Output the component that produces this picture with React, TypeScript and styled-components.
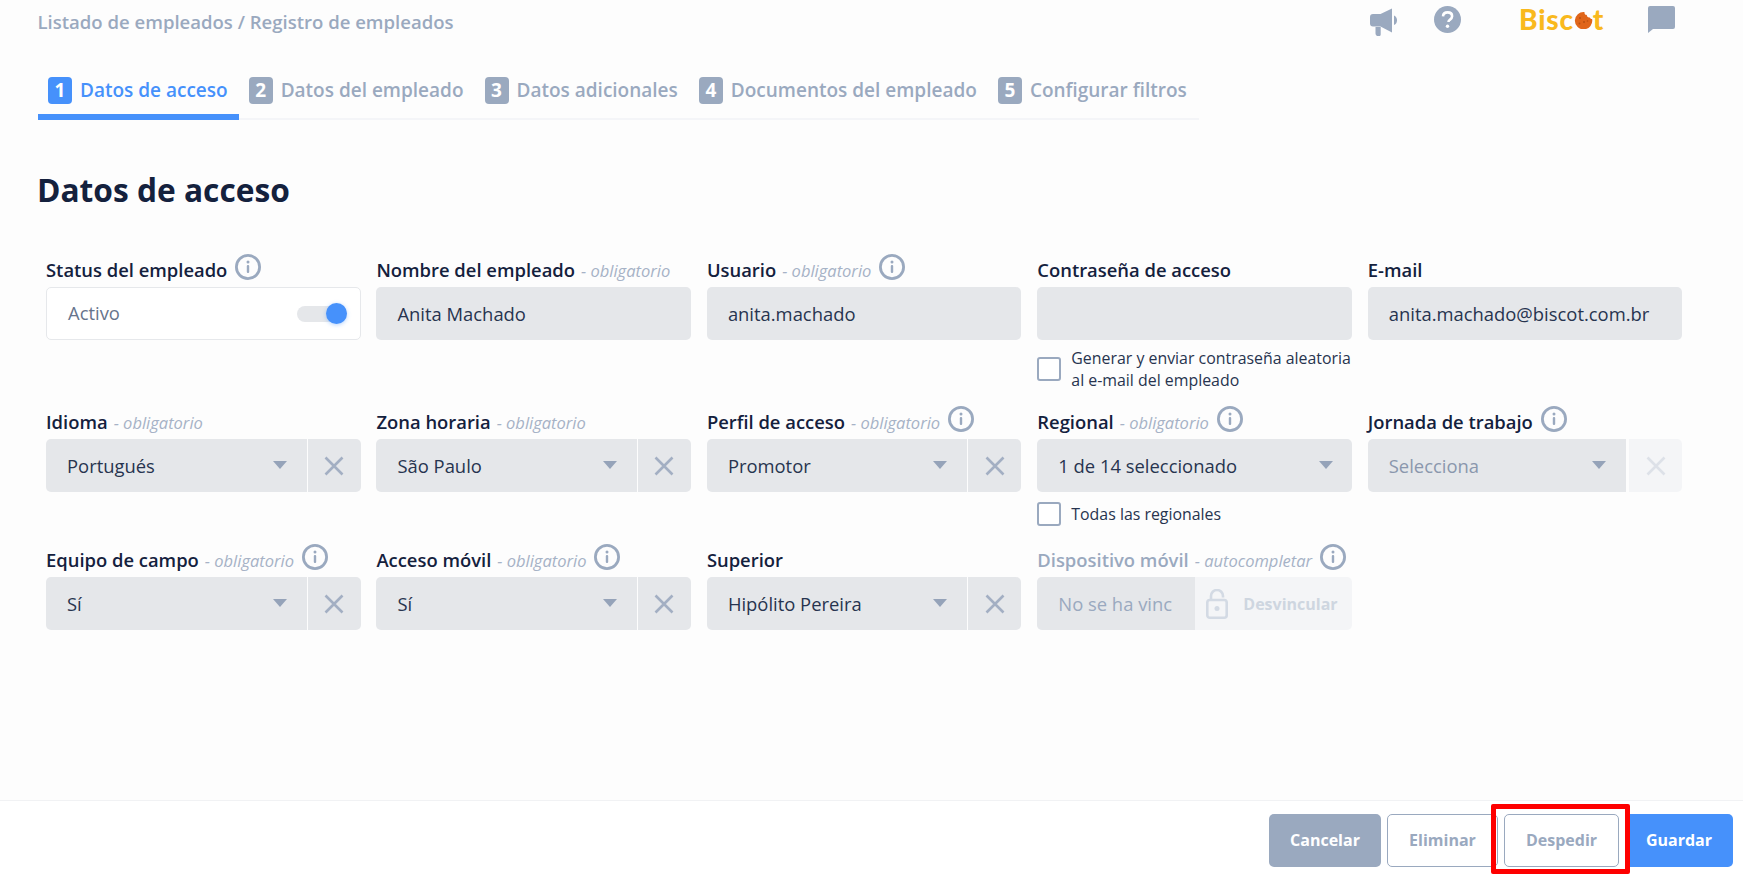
import React from "react";
import styled, { createGlobalStyle } from "styled-components";

const Global = createGlobalStyle`
  html, body { margin: 0; padding: 0; background: #fdfdfd; }
  * { box-sizing: border-box; }
  body { font-family: "Open Sans", "Liberation Sans", sans-serif; }
`;

const BLUE = "#4691fb";
const GRAY = "#9aa9bf";
const DARK = "#14213d";
const FIELD = "#e5e7ea";
const SOFT = "#f4f5f7";

const Page = styled.div`
  height: 879px;
  width: 1743px;
  display: flex;
  flex-direction: column;
  overflow: hidden;
`;
const Header = styled.header`
  height: 46px;
  flex: none;
  display: flex;
  align-items: flex-start;
  justify-content: space-between;
  padding: 0 68px 0 37.5px;
`;
const Breadcrumb = styled.div`
  font-size: 18.55px;
  font-weight: 600;
  line-height: 44px;
  color: ${GRAY};
`;
const IconBar = styled.div`
  display: flex;
  align-items: flex-start;
  gap: 37px;
  padding-top: 6px;
`;
const Logo = styled.div`
  width: 85px;
  height: 26px;
  margin: 0 7px 0 21px;
  display: flex;
  align-items: center;
  font-family: Lato, "Open Sans", sans-serif;
  font-weight: 900;
  font-size: 28px;
  line-height: 26px;
  letter-spacing: 0.8px;
  color: #f9b91d;
  svg { margin: 2px 0 0 0; flex: none; }
`;
const Tabs = styled.nav`
  margin-left: 38px;
  width: 1161px;
  height: 74px;
  flex: none;
  display: flex;
  border-bottom: 2px solid #f4f5f8;
`;
const Tab = styled.div<{ $active?: boolean }>`
  height: 74px;
  padding: 31px 11px 0 10px;
  display: flex;
  align-items: flex-start;
  gap: 8px;
  font-size: 19px;
  font-weight: 600;
  line-height: 27px;
  white-space: nowrap;
  color: ${(p) => (p.$active ? BLUE : GRAY)};
  border-bottom: 6px solid ${(p) => (p.$active ? BLUE : "transparent")};
`;
const TabNumber = styled.span<{ $active?: boolean }>`
  width: 24px;
  height: 27px;
  border-radius: 4px;
  background: ${(p) => (p.$active ? BLUE : GRAY)};
  color: #fff;
  font-weight: 700;
  text-align: center;
  flex: none;
`;
const Main = styled.main`
  flex: 1;
  padding: 0 60px 0 46px;
`;
const Title = styled.h1`
  margin: 48px 0 0 -9px;
  height: 44px;
  font-size: 31.7px;
  line-height: 44px;
  font-weight: 700;
  color: ${DARK};
`;
const FormGrid = styled.div`
  margin-top: 45px;
  display: grid;
  grid-template-columns: repeat(5, 314.5px);
  column-gap: 15.95px;
  row-gap: 18px;
  align-items: start;
`;
const Field = styled.div`
  min-width: 0;
`;
const LabelRow = styled.div`
  height: 30px;
  display: flex;
  align-items: flex-start;
  gap: 8px;
  white-space: nowrap;
`;
const Label = styled.label<{ $disabled?: boolean }>`
  font-size: 18.4px;
  font-weight: 600;
  line-height: 26px;
  color: ${(p) => (p.$disabled ? GRAY : DARK)};
`;
const Hint = styled.i`
  font-size: 16.5px;
  font-weight: 400;
  color: #a6b2c6;
  margin-left: 6px;
`;
const InfoWrap = styled.svg`
  width: 26px;
  height: 26px;
  margin-top: -3px;
  flex: none;
`;
const TextBox = styled.div`
  height: 53px;
  border-radius: 5px;
  background: ${FIELD};
  padding: 0 21px;
  font-size: 18.4px;
  line-height: 53px;
  color: #27344f;
  white-space: nowrap;
  overflow: hidden;
`;
const StatusBox = styled.div`
  height: 53px;
  border-radius: 5px;
  background: #fff;
  border: 1px solid #e6e8eb;
  padding: 0 13px 3px 21px;
  display: flex;
  align-items: center;
  justify-content: space-between;
  font-size: 18.4px;
  color: #66748c;
`;
const Track = styled.div`
  width: 50px;
  height: 16px;
  margin-top: 3px;
  border-radius: 8px;
  background: ${FIELD};
  display: flex;
  align-items: center;
  justify-content: flex-end;
`;
const Knob = styled.div`
  width: 21px;
  height: 21px;
  flex: none;
  border-radius: 50%;
  background: ${BLUE};
  box-shadow: 0 1px 4px rgba(70, 145, 251, 0.4);
`;
const SelectRow = styled.div`
  height: 53px;
  display: flex;
`;
const SelectBox = styled.div<{ $solo?: boolean; $muted?: boolean }>`
  flex: 1;
  min-width: 0;
  height: 53px;
  background: ${FIELD};
  border-radius: ${(p) => (p.$solo ? "5px" : "5px 0 0 5px")};
  padding: 0 ${(p) => (p.$solo ? "19px" : "20px")} 0 21px;
  display: flex;
  align-items: center;
  justify-content: space-between;
  font-size: 18.4px;
  color: ${(p) => (p.$muted ? "#8a97ad" : "#27344f")};
  white-space: nowrap;
`;
const Caret = styled.span`
  width: 0;
  height: 0;
  flex: none;
  margin-top: -2px;
  border-left: 7px solid transparent;
  border-right: 7px solid transparent;
  border-top: 8px solid #95a3b9;
`;
const ClearBox = styled.div<{ $disabled?: boolean }>`
  width: 53px;
  flex: none;
  margin-left: ${(p) => (p.$disabled ? "3px" : "1px")};
  background: ${(p) => (p.$disabled ? SOFT : FIELD)};
  border-radius: 0 5px 5px 0;
  color: ${(p) => (p.$disabled ? "#dde1e8" : "#a3afc3")};
  display: flex;
  align-items: center;
  justify-content: center;
`;
const CheckRow = styled.div<{ $tall?: boolean }>`
  margin-top: 7px;
  min-height: ${(p) => (p.$tall ? "44px" : "30px")};
  display: flex;
  align-items: center;
  gap: 10px;
  font-size: 15.9px;
  line-height: 22px;
  color: #27344f;
  white-space: nowrap;
`;
const Box = styled.span`
  width: 24px;
  height: 24px;
  flex: none;
  border-radius: 3px;
  background: #fff;
  border: 2px solid ${GRAY};
`;
const DeviceRow = styled.div`
  height: 53px;
  display: flex;
  border-radius: 5px;
  overflow: hidden;
  background: ${SOFT};
`;
const DeviceInput = styled.div`
  width: 158px;
  flex: none;
  background: ${FIELD};
  padding: 0 0 0 21px;
  font-size: 18.4px;
  line-height: 53px;
  color: ${GRAY};
  overflow: hidden;
  white-space: nowrap;
`;
const Unlink = styled.div`
  flex: 1;
  padding-left: 11px;
  display: flex;
  align-items: center;
  gap: 15px;
  font-size: 16px;
  font-weight: 700;
  color: #ced6e0;
`;
const Footer = styled.footer`
  height: 79px;
  flex: none;
  background: #fff;
  border-top: 1px solid #f1f2f4;
  padding: 13px 10px 0 0;
  display: flex;
  align-items: flex-start;
  justify-content: flex-end;
  gap: 6px;
`;
const Button = styled.button<{ $kind: "gray" | "outline" | "blue"; $w: number }>`
  width: ${(p) => p.$w}px;
  height: 53px;
  border-radius: 5px;
  font-family: inherit;
  font-size: 16px;
  font-weight: 700;
  padding: 0 0 2px;
  background: ${(p) => (p.$kind === "gray" ? GRAY : p.$kind === "blue" ? BLUE : "#fff")};
  color: ${(p) => (p.$kind === "outline" ? GRAY : "#fff")};
  border: ${(p) => (p.$kind === "outline" ? `1px solid ${GRAY}` : "none")};
`;
const Highlighted = styled.div`
  position: relative;
  display: flex;
  z-index: 1;
`;
const RedFrame = styled.span`
  position: absolute;
  left: -13px;
  right: -11px;
  top: -10px;
  bottom: -7px;
  border: 5px solid #fe0000;
  border-radius: 2px;
`;

const Info = () => (
  <InfoWrap viewBox="0 0 26 26" fill="none">
    <circle cx="13" cy="13" r="11.6" stroke={GRAY} strokeWidth="2.8" />
    <circle cx="13" cy="8" r="1.5" fill={GRAY} />
    <rect x="11.8" y="11" width="2.4" height="8" rx="1" fill={GRAY} />
  </InfoWrap>
);
const X = () => (
  <svg width="20" height="20" viewBox="0 0 20 20" fill="none" stroke="currentColor" strokeWidth="2.6">
    <path d="M1.5 1.5 18.5 18.5M18.5 1.5 1.5 18.5" />
  </svg>
);
const Megaphone = () => (
  <svg width="27" height="28" viewBox="0 0 27 28" style={{ marginTop: 2 }} fill={GRAY}>
    <path d="M3 6h7.5L22 0.5v24L10.5 18.5H3a3 3 0 0 1-3-3v-6.5a3 3 0 0 1 3-3Z" />
    <path d="M5.5 19h5.2v7.5a1.6 1.6 0 0 1-1.6 1.6H8a2.5 2.5 0 0 1-2.5-2.5Z" />
    <path d="M24 7.5c2 .8 3 2.7 3 4.8s-1 4-3 4.8Z" />
  </svg>
);
const Help = () => (
  <svg width="27" height="27" viewBox="0 0 27 27">
    <circle cx="13.5" cy="13.5" r="13.5" fill={GRAY} />
    <path d="M9 10.3c.2-2.5 2-3.9 4.6-3.9 2.6 0 4.5 1.5 4.5 3.8 0 1.9-1.1 2.8-2.3 3.6-1 .7-1.3 1.1-1.3 2.2" fill="none" stroke="#fff" strokeWidth="2.6" />
    <circle cx="13.5" cy="20.3" r="1.7" fill="#fff" />
  </svg>
);
const Chat = () => (
  <svg width="27" height="27" viewBox="0 0 27 27" fill={GRAY}>
    <path d="M2 0h23a2 2 0 0 1 2 2v19a2 2 0 0 1-2 2H5l-5 4V2a2 2 0 0 1 2-2Z" />
  </svg>
);
const Cookie = () => (
  <svg width="19" height="18" viewBox="0 0 19 18">
    <path d="M10.5 1c-.3 2 1 3.2 2.3 2.8-.1 1.8 1.3 3 3 2.6.2.9 1 1.5 2.3 1.6A8.7 8.7 0 1 1 10.5 1Z" fill="#e0651a" />
    <circle cx="6" cy="7" r="1" fill="#b94f10" />
    <circle cx="10" cy="11" r="1" fill="#b94f10" />
    <circle cx="5.5" cy="12.5" r="0.9" fill="#b94f10" />
    <circle cx="13.5" cy="10" r="0.8" fill="#b94f10" />
  </svg>
);
const Lock = () => (
  <svg width="22" height="30" viewBox="0 0 22 30" fill="none" stroke="#d3dae4" strokeWidth="2.6" style={{ flex: "none" }}>
    <rect x="1.3" y="11" width="19.4" height="17.7" rx="2.5" />
    <path d="M5 11V7a6 6 0 0 1 12 0v1.5" />
    <circle cx="11" cy="19.5" r="2.5" fill="#d3dae4" stroke="none" />
  </svg>
);

const tabs = ["Datos de acceso", "Datos del empleado", "Datos adicionales", "Documentos del empleado", "Configurar filtros"];

const Head = ({ label, hint, info, disabled }: { label: string; hint?: string; info?: boolean; disabled?: boolean }) => (
  <LabelRow>
    <Label $disabled={disabled}>
      {label}
      {hint && <Hint>- {hint}</Hint>}
    </Label>
    {info && <Info />}
  </LabelRow>
);

const Select = ({ value, muted, disabledClear }: { value: string; muted?: boolean; disabledClear?: boolean }) => (
  <SelectRow>
    <SelectBox $muted={muted}>
      {value}
      <Caret />
    </SelectBox>
    <ClearBox $disabled={disabledClear}>
      <X />
    </ClearBox>
  </SelectRow>
);

export default function App() {
  return (
    <Page>
      <Global />
      <Header>
        <Breadcrumb>Listado de empleados / Registro de empleados</Breadcrumb>
        <IconBar>
          <Megaphone />
          <Help />
          <Logo>
            Bisc
            <Cookie />t
          </Logo>
          <Chat />
        </IconBar>
      </Header>
      <Tabs>
        {tabs.map((t, i) => (
          <Tab key={t} $active={i === 0}>
            <TabNumber $active={i === 0}>{i + 1}</TabNumber>
            {t}
          </Tab>
        ))}
      </Tabs>
      <Main>
        <Title>Datos de acceso</Title>
        <FormGrid>
          <Field>
            <Head label="Status del empleado" info />
            <StatusBox>
              Activo
              <Track>
                <Knob />
              </Track>
            </StatusBox>
          </Field>
          <Field>
            <Head label="Nombre del empleado" hint="obligatorio" />
            <TextBox>Anita Machado</TextBox>
          </Field>
          <Field>
            <Head label="Usuario" hint="obligatorio" info />
            <TextBox>anita.machado</TextBox>
          </Field>
          <Field>
            <Head label="Contraseña de acceso" />
            <TextBox />
            <CheckRow $tall>
              <Box />
              <span>
                Generar y enviar contraseña aleatoria
                <br />
                al e-mail del empleado
              </span>
            </CheckRow>
          </Field>
          <Field>
            <Head label="E-mail" />
            <TextBox>anita.machado@biscot.com.br</TextBox>
          </Field>

          <Field>
            <Head label="Idioma" hint="obligatorio" />
            <Select value="Portugués" />
          </Field>
          <Field>
            <Head label="Zona horaria" hint="obligatorio" />
            <Select value="São Paulo" />
          </Field>
          <Field>
            <Head label="Perfil de acceso" hint="obligatorio" info />
            <Select value="Promotor" />
          </Field>
          <Field>
            <Head label="Regional" hint="obligatorio" info />
            <SelectBox $solo>
              1 de 14 seleccionado
              <Caret />
            </SelectBox>
            <CheckRow>
              <Box />
              Todas las regionales
            </CheckRow>
          </Field>
          <Field>
            <Head label="Jornada de trabajo" info />
            <Select value="Selecciona" muted disabledClear />
          </Field>

          <Field>
            <Head label="Equipo de campo" hint="obligatorio" info />
            <Select value="Sí" />
          </Field>
          <Field>
            <Head label="Acceso móvil" hint="obligatorio" info />
            <Select value="Sí" />
          </Field>
          <Field>
            <Head label="Superior" />
            <Select value="Hipólito Pereira" />
          </Field>
          <Field>
            <Head label="Dispositivo móvil" hint="autocompletar" info disabled />
            <DeviceRow>
              <DeviceInput>No se ha vinc</DeviceInput>
              <Unlink>
                <Lock />
                Desvincular
              </Unlink>
            </DeviceRow>
          </Field>
        </FormGrid>
      </Main>
      <Footer>
        <Button $kind="gray" $w={112}>Cancelar</Button>
        <Button $kind="outline" $w={111}>Eliminar</Button>
        <Highlighted>
          <Button $kind="outline" $w={115}>Despedir</Button>
          <RedFrame />
        </Highlighted>
        <Button $kind="blue" $w={108}>Guardar</Button>
      </Footer>
    </Page>
  );
}
